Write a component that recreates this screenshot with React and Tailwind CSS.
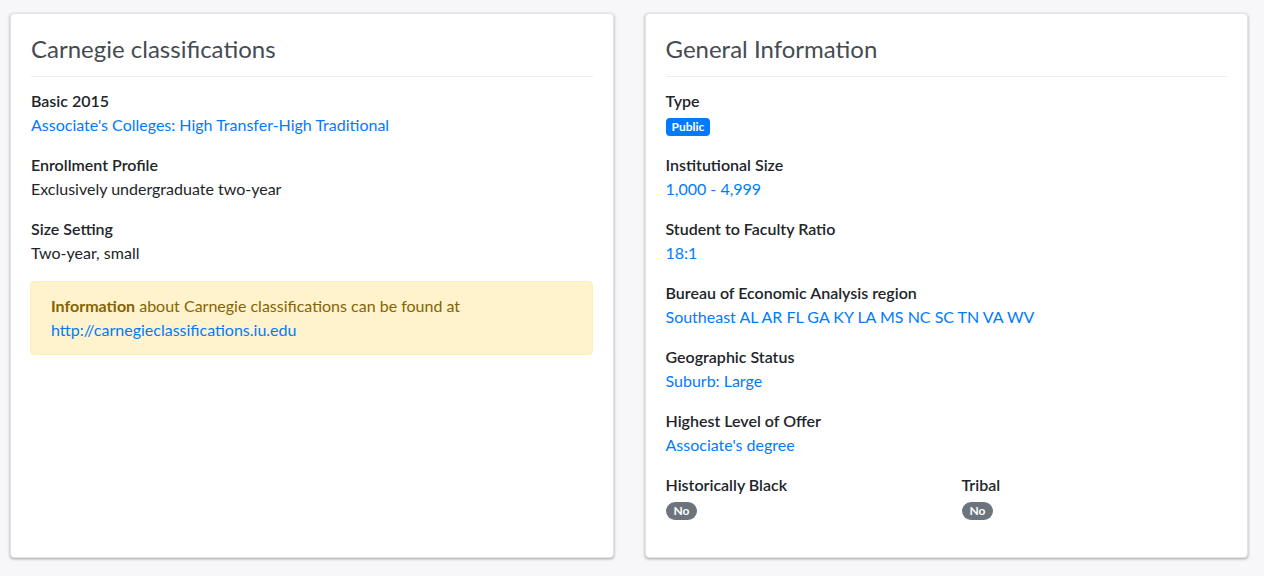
import React from 'react';

const font = { fontFamily: 'Lato, "Noto Sans", sans-serif' };

const Field = ({ label, children }) => (
  <div className="mb-4">
    <div className="text-[16px] leading-6 font-semibold text-[#212529]">{label}</div>
    <div className="text-[16px] leading-6">{children}</div>
  </div>
);

const Link = ({ children }) => (
  <a href="#" className="text-[#007bff]">{children}</a>
);

const Badge = ({ children, pill, color }) => (
  <span
    className={`inline-block align-middle text-white text-[12px] leading-none font-bold py-[3px] ${
      pill ? 'rounded-full px-[8px]' : 'rounded-[4px] px-[6px]'
    } ${color}`}
  >
    {children}
  </span>
);

const Card = ({ title, children }) => (
  <div className="flex-1 bg-white rounded-[4px] border border-[#e3e3e6] shadow-[0_1px_3px_rgba(0,0,0,0.35)] px-5 pt-5 pb-4">
    <h2 className="text-[24px] leading-[29px] text-[#454b52] font-normal">{title}</h2>
    <hr className="mt-[13px] mb-[12px] border-0 border-t border-[#ececec]" />
    {children}
  </div>
);

export default function App() {
  return (
    <div style={font} className="min-h-screen bg-[#f7f7f9] pl-[10px] pr-[16px] pt-[13px] pb-[18px] text-[#212529]">
      <div className="flex gap-[31px] items-stretch h-[545px]">
        <Card title="Carnegie classifications">
          <Field label="Basic 2015">
            <Link>Associate's Colleges: High Transfer-High Traditional</Link>
          </Field>
          <Field label="Enrollment Profile">Exclusively undergraduate two-year</Field>
          <Field label="Size Setting">Two-year, small</Field>
          <div className="-ml-px bg-[#fff3cd] border border-[#ffeeba] rounded-[4px] px-5 py-3 text-[#856404] text-[16px] leading-6">
            <strong className="font-bold">Information</strong> about Carnegie classifications can be found at
            <br />
            <Link>http://carnegieclassifications.iu.edu</Link>
          </div>
        </Card>

        <Card title="General Information">
          <Field label="Type">
            <Badge color="bg-[#007bff]">Public</Badge>
          </Field>
          <Field label="Institutional Size">
            <Link>1,000 - 4,999</Link>
          </Field>
          <Field label="Student to Faculty Ratio">
            <Link>18:1</Link>
          </Field>
          <Field label="Bureau of Economic Analysis region">
            <Link>Southeast AL AR FL GA KY LA MS NC SC TN VA WV</Link>
          </Field>
          <Field label="Geographic Status">
            <Link>Suburb: Large</Link>
          </Field>
          <Field label="Highest Level of Offer">
            <Link>Associate's degree</Link>
          </Field>
          <div className="grid grid-cols-[296px_1fr]">
            <Field label="Historically Black">
              <Badge pill color="bg-[#6c757d]">No</Badge>
            </Field>
            <Field label="Tribal">
              <Badge pill color="bg-[#6c757d]">No</Badge>
            </Field>
          </div>
        </Card>
      </div>
    </div>
  );
}
